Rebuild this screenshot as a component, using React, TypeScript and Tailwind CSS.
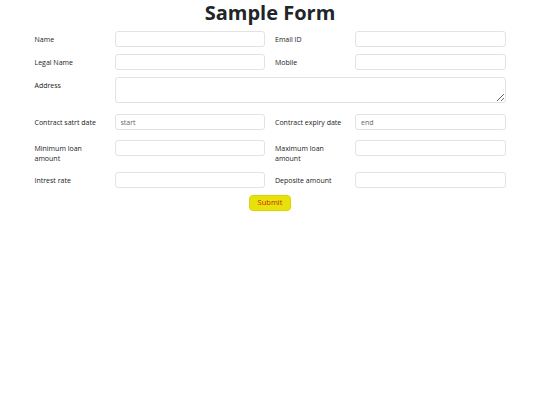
import React from 'react';

const font = { fontFamily: '"Open Sans", "Noto Sans", sans-serif' };

function Field({ label, placeholder }: { label: string; placeholder?: string }) {
  return (
    <div className="flex flex-1">
      <label className="w-[80px] shrink-0 pt-[4px] pr-2 text-[7px] leading-[10px] text-[#222]">{label}</label>
      <input
        type="text"
        placeholder={placeholder}
        className="h-[16px] flex-1 rounded-[3px] border border-[#e3e3e3] bg-white px-[5px] text-[7px] text-[#333] placeholder:text-[#666] outline-none"
      />
    </div>
  );
}

export default function App() {
  return (
    <div className="min-h-[405px] w-full bg-white" style={font}>
      <h1 className="text-center text-[20px] font-bold leading-[25px] text-[#212529]">Sample Form</h1>
      <form className="mx-auto mt-[6px] w-[471px]" onSubmit={(e) => e.preventDefault()}>
        <div className="flex gap-[10px]">
          <Field label="Name" />
          <Field label="Email ID" />
        </div>
        <div className="mt-[7px] flex gap-[10px]">
          <Field label="Legal Name" />
          <Field label="Mobile" />
        </div>
        <div className="mt-[7px] flex">
          <label className="w-[80px] shrink-0 pt-[4px] text-[7px] leading-[10px] text-[#222]">Address</label>
          <textarea className="h-[26px] flex-1 rounded-[3px] border border-[#e3e3e3] bg-white px-[5px] text-[7px] outline-none" />
        </div>
        <div className="mt-[11px] flex gap-[10px]">
          <Field label="Contract satrt date" placeholder="start" />
          <Field label="Contract expiry date" placeholder="end" />
        </div>
        <div className="mt-[10px] flex items-start gap-[10px]">
          <Field label="Minimum loan amount" />
          <Field label="Maximum loan amount" />
        </div>
        <div className="mt-[8px] flex gap-[10px]">
          <Field label="Intrest rate" />
          <Field label="Deposite amount" />
        </div>
        <div className="mt-[7px] flex justify-center">
          <button
            type="submit"
            className="h-[16px] w-[42px] rounded-[4px] border border-[#dcd500] bg-[#e9e20a] text-[7.5px] font-medium leading-none text-[#c02a10]"
          >
            Submit
          </button>
        </div>
      </form>
    </div>
  );
}
